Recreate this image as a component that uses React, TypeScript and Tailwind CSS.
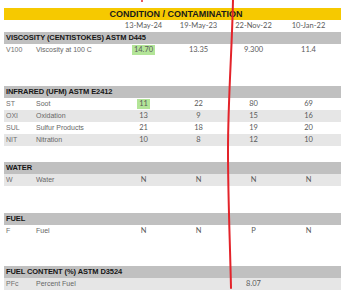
import React from "react";

type Row = {
  code: string;
  label: string;
  values: string[];
  shade?: boolean;
  hi?: boolean; // first value highlighted green
};

type Section = {
  title: string;
  gap: string;
  rows: Row[];
};

const dates = ["13-May-24", "19-May-23", "22-Nov-22", "10-Jan-22"];

const sections: Section[] = [
  {
    title: "VISCOSITY (CENTISTOKES) ASTM D445",
    gap: "mt-0",
    rows: [{ code: "V100", label: "Viscosity at 100 C", values: ["14.70", "13.35", "9.300", "11.4"], hi: true }],
  },
  {
    title: "INFRARED (UFM) ASTM E2412",
    gap: "mt-[30px]",
    rows: [
      { code: "ST", label: "Soot", values: ["11", "22", "80", "69"], hi: true },
      { code: "OXI", label: "Oxidation", values: ["13", "9", "15", "16"], shade: true },
      { code: "SUL", label: "Sulfur Products", values: ["21", "18", "19", "20"] },
      { code: "NIT", label: "Nitration", values: ["10", "8", "12", "10"], shade: true },
    ],
  },
  {
    title: "WATER",
    gap: "mt-[16px]",
    rows: [{ code: "W", label: "Water", values: ["N", "N", "N", "N"], shade: true }],
  },
  {
    title: "FUEL",
    gap: "mt-[27px]",
    rows: [{ code: "F", label: "Fuel", values: ["N", "N", "P", "N"] }],
  },
  {
    title: "FUEL CONTENT (%) ASTM D3524",
    gap: "mt-[29px]",
    rows: [{ code: "PFc", label: "Percent Fuel", values: ["", "", "8.07", ""], shade: true }],
  },
];

const grid = "grid grid-cols-[32px_80px_55px_55px_55px_55px]";
const num = "text-center text-[7.5px] text-[#5a5a5a] font-['Lato',sans-serif]";

export default function App() {
  return (
    <div className="relative w-[350px] h-[293px] bg-white overflow-hidden font-['Liberation_Sans',Arial,sans-serif]">
      <div className="ml-[4px] w-[337px] pt-[8px]">
        {/* title bar */}
        <div className="h-[12px] bg-[#f6c900] pl-[7px] text-center text-[9px] font-bold leading-[12px] text-[#1a1a1a]">
          CONDITION / CONTAMINATION
        </div>

        {/* dates */}
        <div className={`${grid} h-[12px] items-center`}>
          <span />
          <span />
          {dates.map((d) => (
            <span key={d} className={num}>{d}</span>
          ))}
        </div>

        {sections.map((s) => (
          <div key={s.title} className={s.gap}>
            <div className="h-[12px] bg-[#c0c0c0] pl-[2px] text-[7.5px] font-bold leading-[12px] tracking-[-0.1px] text-[#161616]">
              {s.title}
            </div>
            {s.rows.map((r) => (
              <div
                key={r.code}
                className={`${grid} h-[12px] items-center ${r.shade ? "bg-[#e6e6e6]" : "bg-white"}`}
              >
                <span className="pl-[2px] text-[7px] text-[#707070]">{r.code}</span>
                <span className="text-[7px] text-[#666]">{r.label}</span>
                {r.values.map((v, i) => (
                  <span key={i} className={num}>
                    {i === 0 && r.hi ? (
                      <span className="inline-block px-[2px] leading-[10px] bg-[#b3e598]">{v}</span>
                    ) : (
                      v
                    )}
                  </span>
                ))}
              </div>
            ))}
          </div>
        ))}
      </div>

      {/* hand-drawn red marker line over the sheet */}
      <svg className="absolute left-0 top-0 pointer-events-none" width="350" height="293">
        <path
          d="M233 0 C232 50 228 100 228 150 S230 240 231 288"
          fill="none"
          stroke="#e3232a"
          strokeWidth="2"
          strokeLinecap="round"
        />
        <path d="M142 0 L142 2" stroke="#e3232a" strokeWidth="1.5" />
      </svg>
    </div>
  );
}
